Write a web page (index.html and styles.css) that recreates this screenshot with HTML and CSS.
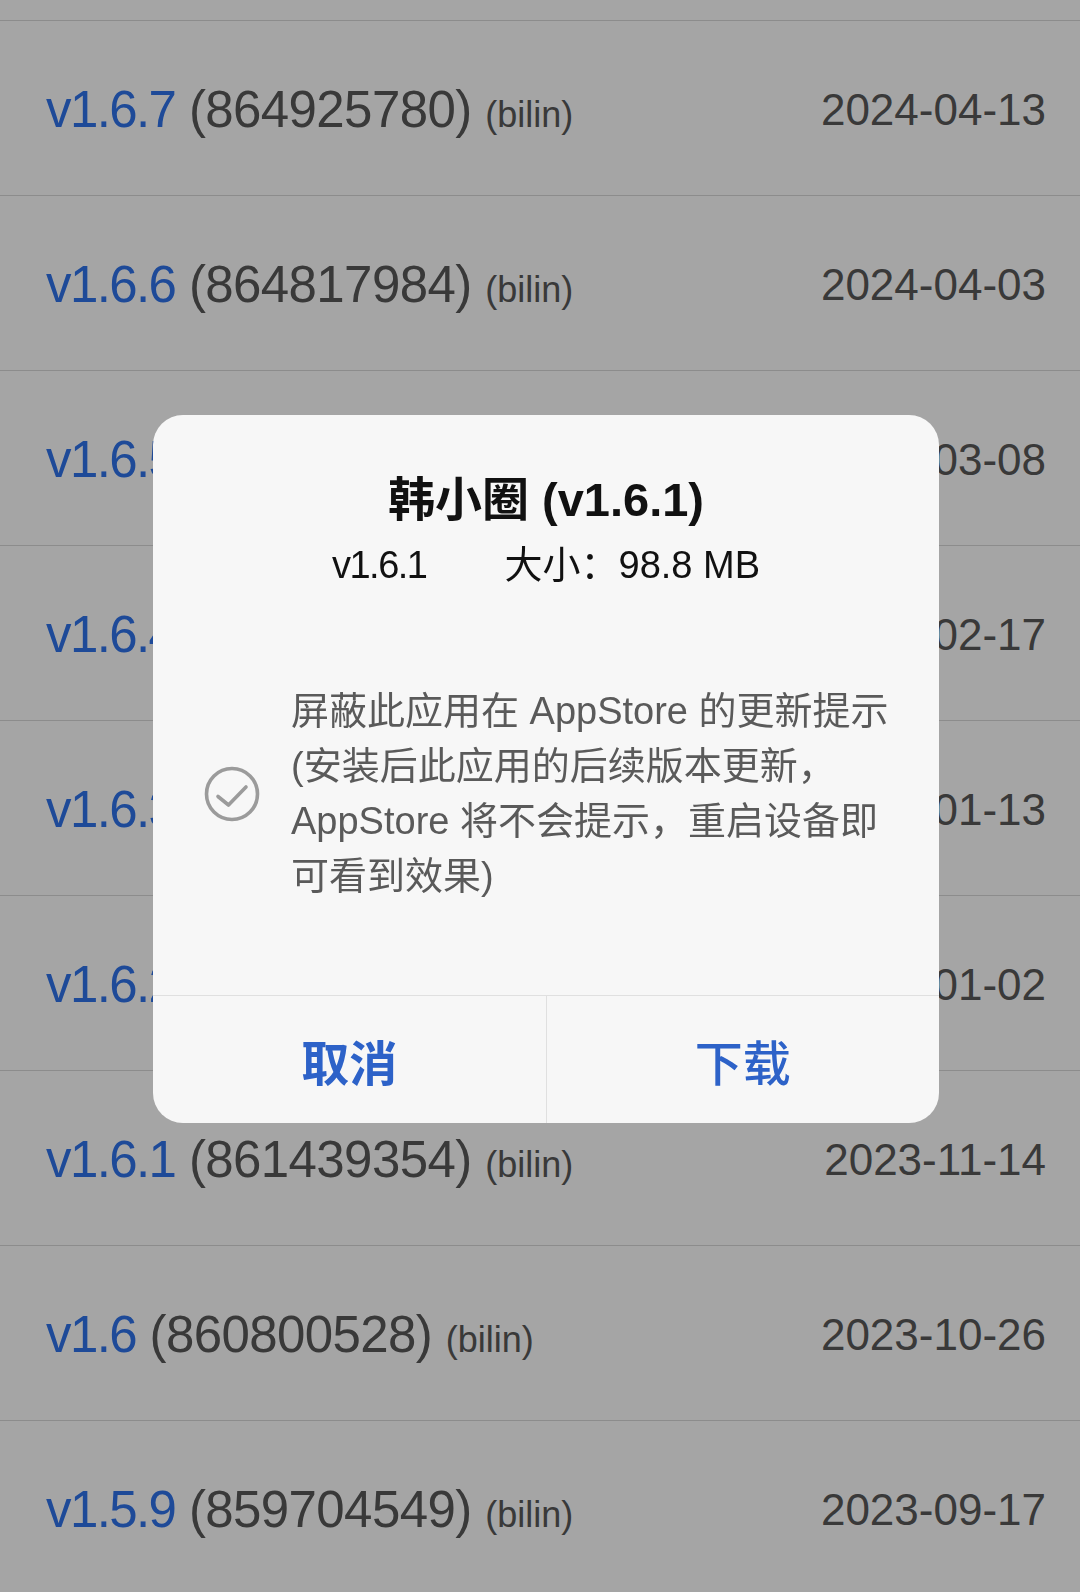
FILE: index.html
```html
<!DOCTYPE html>
<html lang="zh-CN">
<head>
  <meta charset="UTF-8">
  <meta name="viewport" content="width=device-width, initial-scale=1.0">
  <title>历史版本</title>
  <link rel="stylesheet" href="styles.css">
</head>
<body>
  <ul class="version-list">
    <li class="version-row">
      <span class="version-name"><span class="ver">v1.6.7</span> <span class="build">(864925780)</span> <span class="src">(bilin)</span></span>
      <span class="date">2024-04-13</span>
    </li>
    <li class="version-row">
      <span class="version-name"><span class="ver">v1.6.6</span> <span class="build">(864817984)</span> <span class="src">(bilin)</span></span>
      <span class="date">2024-04-03</span>
    </li>
    <li class="version-row">
      <span class="version-name"><span class="ver">v1.6.5</span> <span class="build">(863996512)</span> <span class="src">(bilin)</span></span>
      <span class="date">2024-03-08</span>
    </li>
    <li class="version-row">
      <span class="version-name"><span class="ver">v1.6.4</span> <span class="build">(863401268)</span> <span class="src">(bilin)</span></span>
      <span class="date">2024-02-17</span>
    </li>
    <li class="version-row">
      <span class="version-name"><span class="ver">v1.6.3</span> <span class="build">(862815730)</span> <span class="src">(bilin)</span></span>
      <span class="date">2024-01-13</span>
    </li>
    <li class="version-row">
      <span class="version-name"><span class="ver">v1.6.2</span> <span class="build">(862290415)</span> <span class="src">(bilin)</span></span>
      <span class="date">2024-01-02</span>
    </li>
    <li class="version-row">
      <span class="version-name"><span class="ver">v1.6.1</span> <span class="build">(861439354)</span> <span class="src">(bilin)</span></span>
      <span class="date">2023-11-14</span>
    </li>
    <li class="version-row">
      <span class="version-name"><span class="ver">v1.6</span> <span class="build">(860800528)</span> <span class="src">(bilin)</span></span>
      <span class="date">2023-10-26</span>
    </li>
    <li class="version-row">
      <span class="version-name"><span class="ver">v1.5.9</span> <span class="build">(859704549)</span> <span class="src">(bilin)</span></span>
      <span class="date">2023-09-17</span>
    </li>
  </ul>

  <!-- затемнение под диалогом -->
  <div class="mask"></div>

  <div class="dialog">
    <div class="dialog-body">
      <h2 class="dialog-title">韩小圈 (v1.6.1)</h2>
      <div class="dialog-meta">
        <span class="meta-ver">v1.6.1</span>
        <span>大小：98.8 MB</span>
      </div>

      <label class="option">
        <svg class="option-check" width="58" height="58" viewBox="0 0 58 58">
          <circle cx="29" cy="29" r="25.5" fill="none" stroke="#9b9b9b" stroke-width="3.6"/>
          <path d="M15 31.5 L25.5 40 L43 22" fill="none" stroke="#9b9b9b" stroke-width="3.6" stroke-linecap="round" stroke-linejoin="round"/>
        </svg>
        <span class="option-text">屏蔽此应用在 AppStore 的更新提示<br>(安装后此应用的后续版本更新，<br>AppStore 将不会提示，重启设备即<br>可看到效果)</span>
      </label>
    </div>

    <div class="dialog-actions">
      <button class="action action-cancel">取消</button>
      <button class="action action-ok">下载</button>
    </div>
  </div>
</body>
</html>
```

FILE: styles.css
```css
body {
  margin: 0;
  padding: 0;
  background-color: #f7f7f7;
  font-family: "Liberation Sans", "Noto Sans CJK SC", sans-serif;
  overflow: hidden;
  height: 1592px;
}

.version-list {
  list-style: none;
  margin: 20px 0 0;
  padding: 0;
  border-top: 1px solid #d1d1d1;
}

.version-row {
  box-sizing: border-box;
  height: 175px;
  display: flex;
  align-items: center;
  justify-content: space-between;
  padding: 3px 34px 0 46px;
  border-bottom: 1px solid #d1d1d1;
}

.version-name {
  white-space: nowrap;
  font-size: 51px;
  letter-spacing: -0.6px;
}

.ver {
  color: #2d6fe3;
  letter-spacing: -1.6px;
}

.build {
  color: #555;
}

.src {
  color: #555;
  font-size: 36px;
  letter-spacing: 0;
}

.date {
  color: #555;
  font-size: 44px;
}

.mask {
  position: fixed;
  top: 0;
  left: 0;
  right: 0;
  bottom: 0;
  background-color: rgba(0, 0, 0, 0.33);
}

.dialog {
  position: fixed;
  top: 415px;
  left: 153px;
  width: 786px;
  background-color: #f7f7f7;
  border-radius: 30px;
  overflow: hidden;
}

.dialog-body {
  padding: 51px 45px 91px;
}

.dialog-title {
  margin: 0;
  text-align: center;
  font-size: 47px;
  line-height: 68px;
  font-weight: 700;
  color: #111;
}

.dialog-meta {
  margin-top: 3px;
  display: flex;
  justify-content: center;
  gap: 78px;
  font-size: 38px;
  line-height: 56px;
  color: #111;
}

.meta-ver {
  letter-spacing: -1.5px;
}

.option {
  margin: 91px 0 0 5px;
  display: flex;
  align-items: center;
  gap: 30px;
}

.option-check {
  flex: none;
}

.option-text {
  font-size: 38px;
  line-height: 55px;
  color: #5a5a5a;
  white-space: nowrap;
}

.dialog-actions {
  display: flex;
  border-top: 1px solid #e0e0e0;
}

.action {
  flex: 1;
  height: 127px;
  margin: 0;
  padding: 0;
  border: none;
  background: none;
  font-family: "Noto Sans CJK SC", sans-serif;
  font-size: 48px;
  color: #2d62c8;
}

.action-cancel {
  font-weight: 700;
  border-right: 1px solid #e0e0e0;
}

.action-ok {
  font-weight: 500;
}
```
